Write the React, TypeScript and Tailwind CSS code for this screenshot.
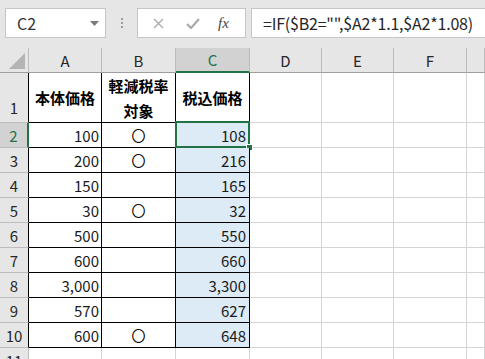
import React from "react";

const rows: { n: number; a: string; b: string; c: string }[] = [
  { n: 2, a: "100", b: "〇", c: "108" },
  { n: 3, a: "200", b: "〇", c: "216" },
  { n: 4, a: "150", b: "", c: "165" },
  { n: 5, a: "30", b: "〇", c: "32" },
  { n: 6, a: "500", b: "", c: "550" },
  { n: 7, a: "600", b: "", c: "660" },
  { n: 8, a: "3,000", b: "", c: "3,300" },
  { n: 9, a: "570", b: "", c: "627" },
  { n: 10, a: "600", b: "〇", c: "648" },
];

const hdr = "flex items-center justify-center bg-[#e6e6e6] border-r border-b border-r-[#bcbcbc] border-b-[#9e9e9e] text-[15px] text-[#262626]";
const rowHdr = "flex items-end justify-center bg-[#e6e6e6] border-b border-b-[#bcbcbc] border-r text-[15px] text-[#262626]";
const grid = "border-r border-b border-[#d4d4d4]";

function CornerCell() {
  return (
    <div className="relative bg-[#e6e6e6] border-r border-b border-r-[#bcbcbc] border-b-[#9e9e9e]">
      <svg className="absolute right-[3px] bottom-[3px]" width="16" height="16" viewBox="0 0 16 16">
        <polygon points="16,0 16,16 0,16" fill="#b4b4b4" />
      </svg>
    </div>
  );
}

function FormulaBar() {
  return (
    <div className="h-[48px] bg-[#e6e6e6] flex items-start pt-[8px] pl-[5px]">
      <div className="w-[101px] h-[30px] bg-white border border-[#c6c6c6] flex items-center pl-[11px] pr-[6px]">
        <span className="text-[16px] text-[#333] flex-1">C2</span>
        <svg width="9" height="5" viewBox="0 0 9 5">
          <polygon points="0,0 9,0 4.5,5" fill="#7a7a7a" />
        </svg>
      </div>
      <div className="w-[31px] h-[30px] flex flex-col items-center justify-center gap-[2px]">
        <span className="w-[2px] h-[2px] bg-[#9a9a9a]" />
        <span className="w-[2px] h-[2px] bg-[#9a9a9a]" />
        <span className="w-[2px] h-[2px] bg-[#9a9a9a]" />
      </div>
      <div className="w-[109px] h-[30px] bg-white border border-[#c6c6c6] flex items-center">
        <svg className="ml-[15px]" width="11" height="11" viewBox="0 0 11 11">
          <path d="M1 1L10 10M10 1L1 10" stroke="#ababab" strokeWidth="1.4" />
        </svg>
        <svg className="ml-[22px]" width="14" height="11" viewBox="0 0 14 11">
          <path d="M1 6L5 10L13 1" stroke="#ababab" strokeWidth="2.2" fill="none" />
        </svg>
        <span className="ml-[18px] text-[15px] italic text-[#444] font-['Liberation_Serif',serif]">fx</span>
      </div>
      <div className="ml-[5px] flex-1 h-[30px] bg-white border border-[#c6c6c6] border-r-0 flex items-center pl-[11px]">
        <span className="text-[16px] text-[#262626] whitespace-nowrap tracking-[-0.2px]">=IF($B2="",$A2*1.1,$A2*1.08)</span>
      </div>
    </div>
  );
}

export default function App() {
  return (
    <div className="w-[485px] h-[359px] overflow-hidden bg-white font-['Noto_Sans_CJK_JP','Noto_Sans',sans-serif] leading-none">
      <FormulaBar />
      <div className="grid grid-cols-[29px_73px_74px_74px_72px_72px_73px_1fr] grid-rows-[25px_50px_repeat(10,25px)]">
        <CornerCell />
        <div className={hdr}>A</div>
        <div className={hdr}>B</div>
        <div className="flex items-center justify-center bg-[#d2d2d2] border-r border-r-[#bcbcbc] border-b-2 border-b-[#217346] text-[15px] text-[#217346]">C</div>
        <div className={hdr}>D</div>
        <div className={hdr}>E</div>
        <div className={hdr}>F</div>
        <div className={hdr}></div>

        <div className={rowHdr + " border-r-black pb-[7px]"}>1</div>
        <div className="flex items-center justify-center border-r border-b border-black font-bold text-[15px] text-black">本体価格</div>
        <div className="flex flex-col items-center justify-center gap-[10px] border-r border-b border-black font-bold text-[15px] text-black">
          <span>軽減税率</span>
          <span>対象</span>
        </div>
        <div className="flex items-center justify-center border-r border-b border-black font-bold text-[15px] text-black">税込価格</div>
        <div className={grid} />
        <div className={grid} />
        <div className={grid} />
        <div className={grid} />

        {rows.map((r) => (
          <React.Fragment key={r.n}>
            {r.n === 2 ? (
              <div className="flex items-end justify-center pb-[4px] bg-[#d2d2d2] border-b border-b-[#bcbcbc] border-r-2 border-r-[#217346] text-[15px] text-[#217346]">2</div>
            ) : (
              <div className={rowHdr + " border-r-black pb-[4px]"}>{r.n}</div>
            )}
            <div className="flex items-center justify-end pr-[2px] border-r border-b border-black text-[15px] text-[#1a1a1a]">{r.a}</div>
            <div className="flex items-center justify-center border-r border-b border-black text-[14px] text-black">{r.b}</div>
            <div className="relative flex items-center justify-end pr-[3px] bg-[#ddebf7] border-r border-b border-black text-[15px] text-[#1a1a1a]">
              {r.c}
              {r.n === 2 && (
                <>
                  <div className="absolute -left-[1px] -top-[2px] -right-[1px] -bottom-[1px] border-2 border-[#217346]" />
                  <div className="absolute -right-[4px] -bottom-[4px] w-[7px] h-[7px] bg-[#217346] border border-white" />
                </>
              )}
            </div>
            <div className={grid} />
            <div className={grid} />
            <div className={grid} />
            <div className={grid} />
          </React.Fragment>
        ))}

        <div className={rowHdr + " border-r-[#bcbcbc] pb-[4px]"}>11</div>
        <div className={grid} />
        <div className={grid} />
        <div className={grid} />
        <div className={grid} />
        <div className={grid} />
        <div className={grid} />
        <div className={grid} />
      </div>
    </div>
  );
}
